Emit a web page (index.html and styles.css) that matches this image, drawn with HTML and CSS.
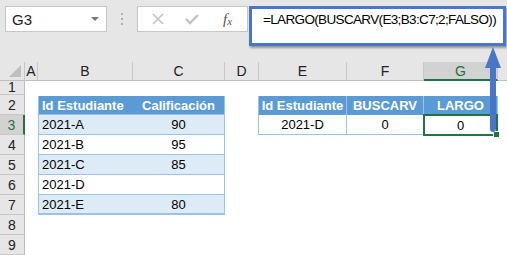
FILE: index.html
```html
<!DOCTYPE html>
<html lang="es">
<head>
    <meta charset="UTF-8">
    <title>LARGO BUSCARV</title>
    <link rel="stylesheet" href="styles.css">
</head>
<body>
    <!-- Barra de fórmulas -->
    <div class="toolbar">
        <div class="name-box">
            <span>G3</span>
            <span class="caret"></span>
        </div>
        <div class="dots"><i></i><i></i><i></i></div>
        <div class="fx-buttons">
            <svg width="12" height="12" viewBox="0 0 12 12"><path d="M1 1 L11 11 M11 1 L1 11" stroke="#c3c3c3" stroke-width="1.6" fill="none"/></svg>
            <svg width="14" height="12" viewBox="0 0 14 12"><path d="M1 6 L5 10 L13 2" stroke="#c3c3c3" stroke-width="2.4" fill="none"/></svg>
            <span class="fx">f<sub>x</sub></span>
        </div>
        <div class="formula">=LARGO(BUSCARV(E3;B3:C7;2;FALSO))</div>
    </div>

    <!-- Hoja -->
    <div class="sheet">
        <div class="corner"><span class="tri"></span></div>
        <div class="col-head">A</div>
        <div class="col-head">B</div>
        <div class="col-head">C</div>
        <div class="col-head">D</div>
        <div class="col-head">E</div>
        <div class="col-head">F</div>
        <div class="col-head active">G</div>
        <div class="col-head last"></div>

        <div class="row-head short">1</div>
        <div class="row-head" style="grid-row: 3">2</div>
        <div class="row-head active" style="grid-row: 4">3</div>
        <div class="row-head" style="grid-row: 5">4</div>
        <div class="row-head" style="grid-row: 6">5</div>
        <div class="row-head" style="grid-row: 7">6</div>
        <div class="row-head" style="grid-row: 8">7</div>
        <div class="row-head" style="grid-row: 9">8</div>
        <div class="row-head" style="grid-row: 10">9</div>

        <div class="tbl-left">
            <div class="tr th"><span>Id Estudiante</span><span class="num">Calificación</span></div>
            <div class="tr band"><span>2021-A</span><span class="num">90</span></div>
            <div class="tr"><span>2021-B</span><span class="num">95</span></div>
            <div class="tr band"><span>2021-C</span><span class="num">85</span></div>
            <div class="tr"><span>2021-D</span><span class="num"></span></div>
            <div class="tr band"><span>2021-E</span><span class="num">80</span></div>
        </div>

        <div class="tbl-right">
            <div class="th">Id Estudiante</div>
            <div class="th">BUSCARV</div>
            <div class="th">LARGO</div>
            <div class="td">2021-D</div>
            <div class="td">0</div>
            <div class="td selected">0<span class="handle"></span></div>
        </div>
    </div>

    <svg class="arrow" width="18" height="86" viewBox="0 0 18 86">
        <path d="M9 0 L17 21 L12 21 L12 82 Q12 85 9 85 Q6 85 6 82 L6 21 L1 21 Z" fill="#4a76c8"/>
    </svg>
</body>
</html>
```

FILE: styles.css
```css
body {
    margin: 0;
    width: 507px;
    height: 255px;
    overflow: hidden;
    background: #fff;
    font-family: "Liberation Sans", Arial, sans-serif;
    color: #000;
    position: relative;
}

/* Barra superior */
.toolbar {
    height: 62px;
    background: #e6e6e6;
    display: flex;
    align-items: flex-start;
    padding: 6px 0 0 5px;
    box-sizing: border-box;
}
.name-box {
    width: 102px;
    height: 26px;
    box-sizing: border-box;
    background: #fff;
    border: 1px solid #c6c6c6;
    display: flex;
    align-items: center;
    justify-content: space-between;
    padding: 0 7px 0 6px;
    font-size: 15px;
    color: #222;
}
.caret {
    width: 0;
    height: 0;
    border-left: 4px solid transparent;
    border-right: 4px solid transparent;
    border-top: 4px solid #777;
}
.dots {
    width: 30px;
    height: 26px;
    display: flex;
    flex-direction: column;
    align-items: center;
    justify-content: center;
    gap: 3px;
}
.dots i {
    width: 2px;
    height: 2px;
    background: #b0b0b0;
}
.fx-buttons {
    width: 111px;
    height: 26px;
    box-sizing: border-box;
    background: #fff;
    border: 1px solid #c6c6c6;
    display: flex;
    align-items: center;
    padding: 0 0 0 14px;
    gap: 21px;
}
.fx {
    font-family: "Liberation Serif", serif;
    font-style: italic;
    font-size: 15px;
    color: #555;
    margin-left: 3px;
}
.fx sub {
    font-size: 11px;
    vertical-align: -1px;
}
.formula {
    margin-left: 1px;
    width: 257px;
    height: 40px;
    box-sizing: border-box;
    background: #fff;
    border: 3px solid #4a76c8;
    box-shadow: 1px 2px 2px rgba(0, 0, 0, 0.35);
    padding: 3px 0 0 11px;
    font-size: 13.5px;
    letter-spacing: -0.65px;
    white-space: nowrap;
}

/* Hoja de cálculo */
.sheet {
    display: grid;
    grid-template-columns: 25px 13px 95px 92px 34px 88px 77px 74px 9px;
    grid-template-rows: 19px 14px repeat(8, 20px);
    font-size: 13px;
}
.corner {
    background: #e6e6e6;
    border-right: 1px solid #c6c6c6;
    border-bottom: 1px solid #bdbdbd;
    position: relative;
}
.tri {
    position: absolute;
    right: 3px;
    bottom: 3px;
    width: 0;
    height: 0;
    border-left: 12px solid transparent;
    border-bottom: 12px solid #bfbfbf;
}
.col-head {
    background: #e6e6e6;
    border-right: 1px solid #c9c9c9;
    border-bottom: 1px solid #bdbdbd;
    display: flex;
    align-items: center;
    justify-content: center;
    font-size: 14px;
    color: #222;
}
.col-head.active {
    background: #d2d2d2;
    border-bottom: 2px solid #217346;
    color: #217346;
}
.col-head.last {
    border-right: none;
}
.row-head {
    grid-column: 1;
    background: #e6e6e6;
    border-right: 1px solid #bdbdbd;
    border-bottom: 1px solid #c9c9c9;
    display: flex;
    align-items: center;
    justify-content: center;
    font-size: 14px;
    color: #222;
}
.row-head.short {
    grid-row: 2;
    align-items: flex-start;
    line-height: 13px;
}
.row-head.active {
    background: #d2d2d2;
    border-right: 2px solid #217346;
    color: #217346;
}

/* Tabla izquierda */
.tbl-left {
    grid-column: 3 / 5;
    grid-row: 3 / 9;
    border: 1px solid #9bc2e6;
    border-top: none;
    margin-top: 1px;
    display: flex;
    flex-direction: column;
}
.tr {
    height: 20px;
    box-sizing: border-box;
    display: grid;
    grid-template-columns: 94px 1fr;
    align-items: center;
    border-bottom: 1px solid #9bc2e6;
    padding-left: 3px;
}
.tr:last-child {
    height: 19px;
}
.tr.th {
    background: #5b9bd5;
    color: #fff;
    font-weight: bold;
    height: 19px;
}
.tr.band {
    background: #ddebf7;
}
.num {
    text-align: center;
    padding-right: 3px;
}

/* Tabla derecha */
.tbl-right {
    grid-column: 6 / 9;
    grid-row: 3 / 5;
    margin-top: 1px;
    display: grid;
    grid-template-columns: 88px 77px 74px;
    grid-template-rows: 19px 20px;
    border-left: 1px solid #9bc2e6;
    margin-left: -1px;
}
.tbl-right .th {
    background: #5b9bd5;
    color: #fff;
    font-weight: bold;
    border-right: 1px solid #9bc2e6;
    display: flex;
    align-items: center;
    justify-content: center;
}
.tbl-right .th:last-of-type {
    border-right: none;
}
.tbl-right .td {
    border-right: 1px solid #9bc2e6;
    border-bottom: 1px solid #9bc2e6;
    display: flex;
    align-items: center;
    justify-content: center;
    position: relative;
}
.tbl-right .selected {
    border: 2px solid #217346;
    margin: -1px 0 -1px -1px;
}
.handle {
    position: absolute;
    right: -4px;
    bottom: -4px;
    width: 5px;
    height: 5px;
    background: #217346;
    border: 1px solid #fff;
}

/* Flecha de anotación */
.arrow {
    position: absolute;
    left: 484px;
    top: 47px;
}
```
